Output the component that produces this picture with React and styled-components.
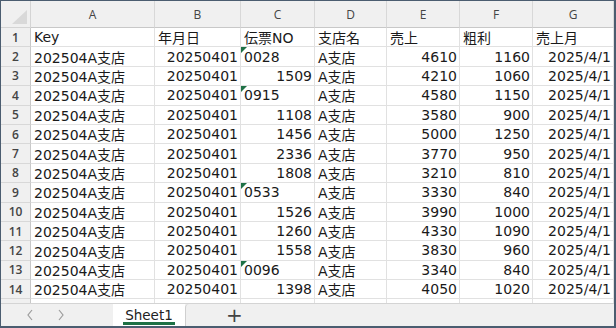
import React from "react";
import styled, { createGlobalStyle } from "styled-components";

const GlobalStyle = createGlobalStyle`
  html, body {
    margin: 0;
    padding: 0;
    background: #ffffff;
  }
`;

const header = ["Key", "年月日", "伝票NO", "支店名", "売上", "粗利", "売上月"];

const rows = [
  ["0028", 4610, 1160],
  [1509, 4210, 1060],
  ["0915", 4580, 1150],
  [1108, 3580, 900],
  [1456, 5000, 1250],
  [2336, 3770, 950],
  [1808, 3210, 810],
  ["0533", 3330, 840],
  [1526, 3990, 1000],
  [1260, 4330, 1090],
  [1558, 3830, 960],
  ["0096", 3340, 840],
  [1398, 4050, 1020],
];

const letters = ["A", "B", "C", "D", "E", "F", "G"];

function Chevron({ dir }) {
  const d = dir === "left" ? "M6 1 L2 6 L6 11" : "M2 1 L6 6 L2 11";
  return (
    <svg width="8" height="12" viewBox="0 0 8 12">
      <path d={d} fill="none" stroke="#9c9c9c" strokeWidth="1.2" />
    </svg>
  );
}

function Workbook() {
  return (
    <Frame>
      <Sheet>
        <Corner>
          <svg width="30" height="27" viewBox="0 0 30 27">
            <polygon points="11,23 26,9 26,23" fill="#d9d9d9" />
          </svg>
        </Corner>
        {letters.map((l) => (
          <ColHead key={l}>{l}</ColHead>
        ))}

        <RowHead>1</RowHead>
        {header.map((h) => (
          <Cell key={h}>{h}</Cell>
        ))}

        {rows.map(([no, sales, profit], i) => {
          const isText = typeof no === "string";
          return (
            <React.Fragment key={i}>
              <RowHead>{i + 2}</RowHead>
              <Cell>202504A支店</Cell>
              <Cell $num>20250401</Cell>
              <Cell $num={!isText} $flag={isText}>
                {no}
              </Cell>
              <Cell>A支店</Cell>
              <Cell $num>{sales}</Cell>
              <Cell $num>{profit}</Cell>
              <Cell $num>2025/4/1</Cell>
            </React.Fragment>
          );
        })}

        <RowHead />
        {letters.map((l) => (
          <Cell key={"e" + l} />
        ))}
      </Sheet>

      <TabBar>
        <NavArrows>
          <Chevron dir="left" />
          <Chevron dir="right" />
        </NavArrows>
        <Tab>Sheet1</Tab>
        <AddArea>
          <Plus>+</Plus>
        </AddArea>
      </TabBar>
    </Frame>
  );
}

export default function App() {
  return (
    <>
      <GlobalStyle />
      <Workbook />
    </>
  );
}

const Frame = styled.div`
  width: 616px;
  height: 328px;
  box-sizing: border-box;
  border: 1px solid #4b5d70;
  border-right-width: 2px;
  border-bottom-width: 2px;
  display: flex;
  flex-direction: column;
  overflow: hidden;
  background: #ffffff;
  font-family: "DejaVu Sans", "Noto Sans CJK JP", sans-serif;
`;

const Sheet = styled.div`
  height: 302px;
  flex: none;
  overflow: hidden;
  display: grid;
  grid-template-columns: 30px 124px 86px 74px 72px 73px 73px 81px;
  grid-template-rows: 27px;
  grid-auto-rows: 19.4px;
`;

const Corner = styled.div`
  background: #f0f0f0;
  border-right: 1px solid #d4d4d4;
  border-bottom: 1px solid #d4d4d4;
  box-sizing: border-box;
  svg {
    display: block;
  }
`;

const ColHead = styled.div`
  background: #f0f0f0;
  border-right: 1px solid #d8d8d8;
  border-bottom: 1px solid #c8c8c8;
  box-sizing: border-box;
  display: flex;
  align-items: center;
  justify-content: center;
  font-family: "Open Sans", "DejaVu Sans", sans-serif;
  font-size: 12px;
  color: #444444;
`;

const RowHead = styled.div`
  background: #f0f0f0;
  border-right: 1px solid #c8c8c8;
  border-bottom: 1px solid #d8d8d8;
  box-sizing: border-box;
  display: flex;
  align-items: center;
  justify-content: center;
  font-family: "Open Sans", "DejaVu Sans", sans-serif;
  font-size: 12px;
  font-weight: 600;
  color: #444444;
`;

const Cell = styled.div`
  position: relative;
  border-right: 1px solid #e1e1e1;
  border-bottom: 1px solid #e1e1e1;
  box-sizing: border-box;
  display: flex;
  align-items: center;
  justify-content: ${(p) => (p.$num ? "flex-end" : "flex-start")};
  padding: 0 2px 0 3px;
  font-size: 14px;
  color: #1a1a1a;
  white-space: nowrap;
  overflow: hidden;
  &::before {
    content: "";
    display: ${(p) => (p.$flag ? "block" : "none")};
    position: absolute;
    left: 0;
    top: 0;
    border-top: 6px solid #1e7145;
    border-right: 6px solid transparent;
  }
`;

const TabBar = styled.div`
  flex: 1;
  display: flex;
  align-items: stretch;
  background: #f0f0f0;
  border-top: 1px solid #d4d4d4;
`;

const NavArrows = styled.div`
  width: 112px;
  display: flex;
  align-items: center;
  gap: 23px;
  padding-left: 25px;
  box-sizing: border-box;
  svg {
    display: block;
  }
`;

const Tab = styled.div`
  width: 72px;
  display: flex;
  align-items: center;
  justify-content: center;
  position: relative;
  font-size: 13.5px;
  color: #222222;
  background: #ffffff;
  &::after {
    content: "";
    position: absolute;
    left: 10px;
    right: 10px;
    bottom: 1px;
    height: 3px;
    background: #1e7145;
  }
`;

const AddArea = styled.div`
  flex: 1;
  display: flex;
  align-items: center;
  padding-left: 40px;
  border-left: 1px solid #cfcfcf;
  border-top-left-radius: 4px;
`;

const Plus = styled.span`
  font-size: 20px;
  color: #444444;
  line-height: 1;
`;
